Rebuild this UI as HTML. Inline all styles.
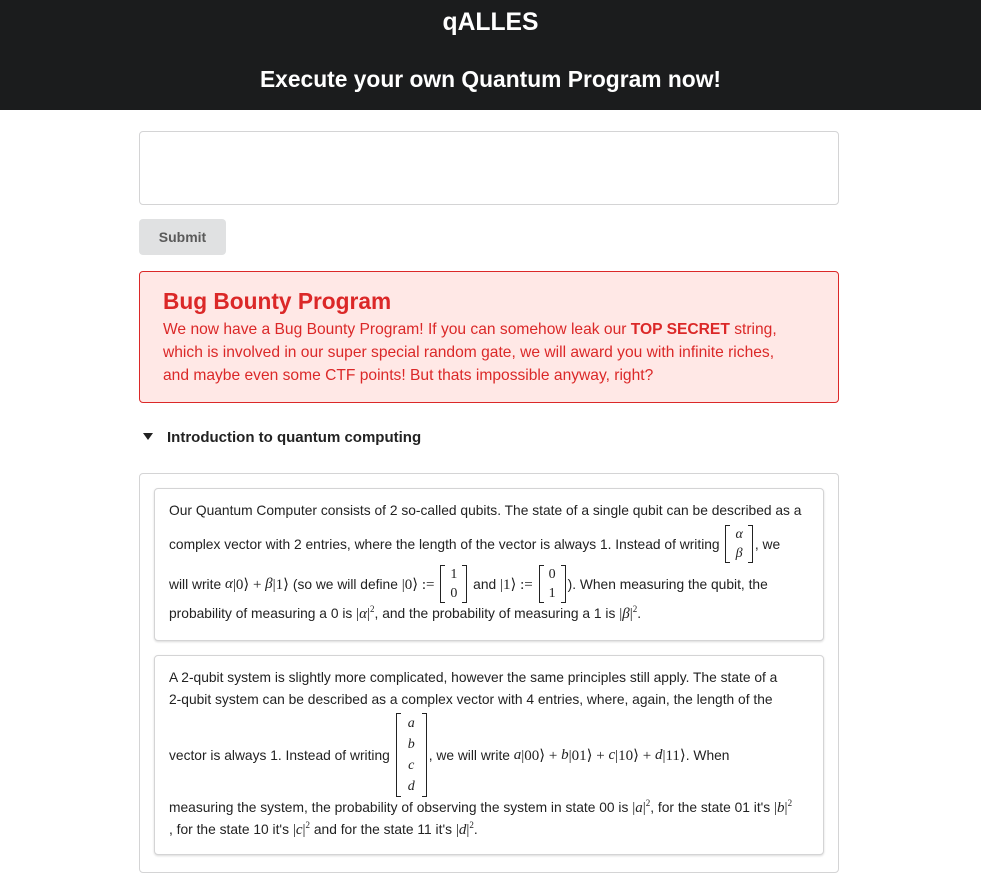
<!DOCTYPE html>
<html><head><meta charset="utf-8"><style>
*{box-sizing:border-box;margin:0;padding:0}
body{width:981px;height:865px;overflow:hidden;background:#fff;font-family:"Liberation Sans",sans-serif;position:relative;color:#222}
.hdr{position:absolute;left:0;top:0;width:981px;height:110px;background:#1b1c1d;color:#fff;text-align:center;font-weight:bold}
.a{position:absolute;white-space:nowrap}
.m{font-family:"Liberation Serif",serif;font-style:italic;font-size:15px}
.r{font-family:"Liberation Serif",serif;font-size:15px}
.card{position:absolute;left:154px;width:670px;border:1px solid #d4d4d5;border-radius:4px;box-shadow:0 1px 2px rgba(0,0,0,.15);background:#fff}
.t{font-size:13.8px;color:#222}
.mat{display:inline-flex;vertical-align:middle;margin:0 2px}
.lb,.rb{width:5px;border:1px solid #222}
.lb{border-right:none}.rb{border-left:none}
.mc{display:flex;flex-direction:column;align-items:center;padding:0 5px;font-family:"Liberation Serif",serif;font-size:14px;line-height:19px}
sup{font-size:9px}
</style></head><body>
<div class="hdr">
<div class="a" style="left:0;width:981px;top:9px;font-size:24.7px">qALLES</div>
<div class="a" style="left:0;width:981px;top:66px;font-size:22.8px">Execute your own Quantum Program now!</div>
</div>
<div class="a" style="left:139px;top:131px;width:700px;height:74px;border:1px solid #d4d4d5;border-radius:4px"></div>
<div class="a" style="left:139px;top:219px;width:87px;height:36px;background:#e0e1e2;border-radius:4px;color:#5a5a5a;font-weight:bold;font-size:14px;text-align:center;line-height:36px">Submit</div>
<div class="a" style="left:139px;top:271px;width:700px;height:132px;background:#ffe8e6;border:1px solid #db2828;border-radius:4px"></div>
<div class="a" style="left:163px;top:288px;font-size:22.7px;font-weight:bold;color:#db2828">Bug Bounty Program</div>
<div class="a" style="left:163px;top:318px;font-size:15.6px;color:#db2828;line-height:23px">We now have a Bug Bounty Program! If you can somehow leak our <b>TOP SECRET</b> string,<br>which is involved in our super special random gate, we will award you with infinite riches,<br>and maybe even some CTF points! But thats impossible anyway, right?</div>
<div class="a" style="left:143px;top:433px;width:0;height:0;border-left:5px solid transparent;border-right:5px solid transparent;border-top:7px solid #222"></div>
<div class="a" style="left:167px;top:429px;font-size:15px;font-weight:bold">Introduction to quantum computing</div>
<div class="a" style="left:139px;top:473px;width:700px;height:400px;border:1px solid #d4d4d5;border-radius:4px"></div>

<div class="card" style="top:488px;height:153px"></div>
<div class="a t" style="left:169px;top:503px">Our Quantum Computer consists of 2 so-called qubits. The state of a single qubit can be described as a</div>
<div class="a t" style="left:169px;top:524px;height:40px;display:flex;align-items:center">complex vector with 2 entries, where the length of the vector is always 1. Instead of writing&nbsp;<span class="mat"><span class="lb"></span><span class="mc"><i>α</i><i>β</i></span><span class="rb"></span></span>, we</div>
<div class="a t" style="left:169px;top:564px;height:40px;display:flex;align-items:center">will write&nbsp;<span class="m">α</span><span class="r">|0⟩&nbsp;+&nbsp;</span><span class="m">β</span><span class="r">|1⟩</span>&nbsp;(so we will define&nbsp;<span class="r">|0⟩&nbsp;:=</span>&nbsp;<span class="mat"><span class="lb"></span><span class="mc"><span>1</span><span>0</span></span><span class="rb"></span></span>&nbsp;and&nbsp;<span class="r">|1⟩&nbsp;:=</span>&nbsp;<span class="mat"><span class="lb"></span><span class="mc"><span>0</span><span>1</span></span><span class="rb"></span></span>). When measuring the qubit, the</div>
<div class="a t" style="left:169px;top:604px">probability of measuring a 0 is <span class="r">|<i>α</i>|<sup>2</sup></span>, and the probability of measuring a 1 is <span class="r">|<i>β</i>|<sup>2</sup></span>.</div>

<div class="card" style="top:655px;height:200px"></div>
<div class="a t" style="left:169px;top:670px">A 2-qubit system is slightly more complicated, however the same principles still apply. The state of a</div>
<div class="a t" style="left:169px;top:692px">2-qubit system can be described as a complex vector with 4 entries, where, again, the length of the</div>
<div class="a t" style="left:169px;top:713px;height:84px;display:flex;align-items:center">vector is always 1. Instead of writing&nbsp;<span class="mat"><span class="lb"></span><span class="mc" style="line-height:21px;padding:0 7px"><i>a</i><i>b</i><i>c</i><i>d</i></span><span class="rb"></span></span>, we will write&nbsp;<span class="m">a</span><span class="r">|00⟩&nbsp;+&nbsp;</span><span class="m">b</span><span class="r">|01⟩&nbsp;+&nbsp;</span><span class="m">c</span><span class="r">|10⟩&nbsp;+&nbsp;</span><span class="m">d</span><span class="r">|11⟩</span>. When</div>
<div class="a t" style="left:169px;top:798px">measuring the system, the probability of observing the system in state 00 is <span class="r">|<i>a</i>|<sup>2</sup></span>, for the state 01 it's <span class="r">|<i>b</i>|<sup>2</sup></span></div>
<div class="a t" style="left:169px;top:820px">, for the state 10 it's <span class="r">|<i>c</i>|<sup>2</sup></span> and for the state 11 it's <span class="r">|<i>d</i>|<sup>2</sup></span>.</div>
</body></html>
